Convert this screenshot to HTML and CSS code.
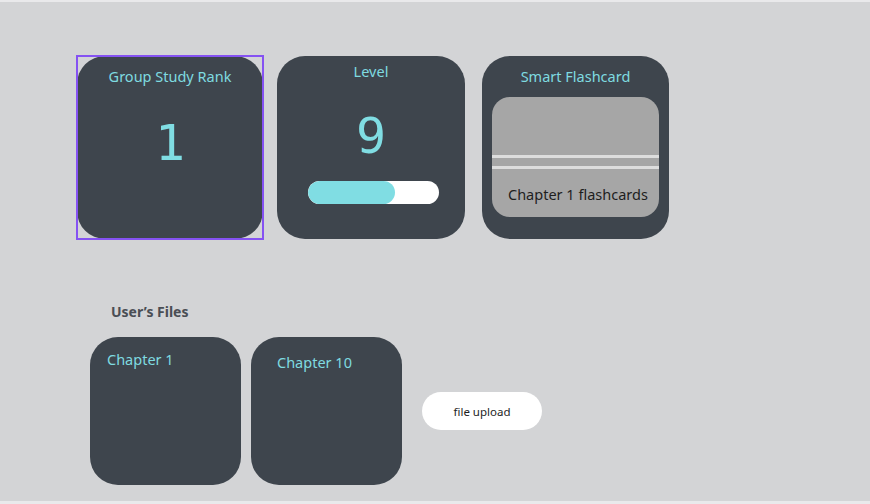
FILE: index.html
```html
<!DOCTYPE html>
<html>
<head>
<meta charset="utf-8">
<link rel="stylesheet" href="styles.css">
</head>
<body>
<div class="page">
  <div class="stats">
    <div class="card rank selected">
      <div class="card-title">Group Study Rank</div>
      <div class="big-num">1</div>
    </div>
    <div class="card level">
      <div class="card-title">Level</div>
      <div class="big-num">9</div>
      <div class="progress"><div class="progress-fill" style="width:67%"></div></div>
    </div>
    <div class="card flash">
      <div class="card-title">Smart Flashcard</div>
      <div class="flash-box">
        <div class="flash-lines"><span></span><span></span></div>
        <div class="flash-label">Chapter 1 flashcards</div>
      </div>
    </div>
  </div>
  <h2 class="section-title">User’s Files</h2>
  <div class="files">
    <div class="file-card first"><span class="file-name">Chapter 1</span></div>
    <div class="file-card second"><span class="file-name">Chapter 10</span></div>
    <button class="upload">file upload</button>
  </div>
</div>
</body>
</html>
```
FILE: styles.css
```css
html, body {
  margin: 0;
  padding: 0;
  background: #e9e9eb;
}
body {
  font-family: "Noto Sans", "Open Sans", sans-serif;
  width: 870px;
  height: 504px;
  overflow: hidden;
}
.page {
  margin-top: 2px;
  height: 499px;
  background: #d3d4d6;
  box-sizing: border-box;
  padding-top: 54px;
}
.stats {
  display: flex;
  padding-left: 77px;
}
.card {
  background: #3e454d;
  border-radius: 28px;
  height: 183px;
  box-sizing: border-box;
  display: flex;
  flex-direction: column;
  align-items: center;
  position: relative;
}
.rank { width: 186px; }
.level { width: 188px; margin-left: 14px; }
.flash { width: 187px; margin-left: 17px; }
.selected::after {
  content: "";
  position: absolute;
  left: -1px;
  top: -1px;
  right: -1px;
  bottom: -1px;
  border: 2px solid #8552f2;
}
.card-title {
  color: #7fdbe0;
  font-size: 14.5px;
  line-height: 18px;
}
.rank .card-title { margin-top: 11px; }
.level .card-title { margin-top: 6px; }
.flash .card-title { margin-top: 11px; }
.big-num {
  color: #80dde3;
  font-family: "DejaVu Sans Mono", monospace;
  font-size: 50px;
  line-height: 50px;
  font-weight: 300;
}
.rank .big-num { margin-top: 33px; }
.level .big-num { margin-top: 31px; }
.progress {
  margin-top: 20px;
  margin-left: 4px;
  width: 131px;
  height: 23px;
  border-radius: 12px;
  background: #ffffff;
  overflow: hidden;
}
.progress-fill {
  height: 100%;
  background: #80dde3;
  border-radius: 12px;
}
.flash-box {
  margin-top: 12px;
  width: 167px;
  height: 120px;
  background: #a6a6a6;
  border-radius: 18px;
  overflow: hidden;
  display: flex;
  flex-direction: column;
}
.flash-lines {
  margin-top: 58px;
  display: flex;
  flex-direction: column;
  gap: 8px;
}
.flash-lines span {
  display: block;
  height: 3px;
  background: #dddddd;
}
.flash-label {
  margin-top: 16px;
  padding-left: 16px;
  color: #1e1e1e;
  font-size: 14.5px;
  line-height: 18px;
}
.section-title {
  margin: 0;
  margin-top: 64px;
  padding-left: 111px;
  font-size: 14px;
  line-height: 18px;
  font-weight: 700;
  color: #4a4e54;
}
.files {
  display: flex;
  align-items: center;
  padding-left: 90px;
  margin-top: 16px;
}
.file-card {
  width: 151px;
  height: 148px;
  background: #3e454d;
  border-radius: 28px;
  box-sizing: border-box;
}
.file-card.first { padding: 11px 0 0 17px; }
.file-card.second { margin-left: 10px; padding: 14px 0 0 26px; }
.file-name {
  color: #7fdbe0;
  font-size: 14.5px;
  line-height: 18px;
}
.upload {
  margin-left: 20px;
  width: 120px;
  height: 38px;
  border: none;
  border-radius: 19px;
  background: #ffffff;
  font-family: "Noto Sans", sans-serif;
  font-size: 11.5px;
  color: #1e1e1e;
  padding: 0;
}
```
